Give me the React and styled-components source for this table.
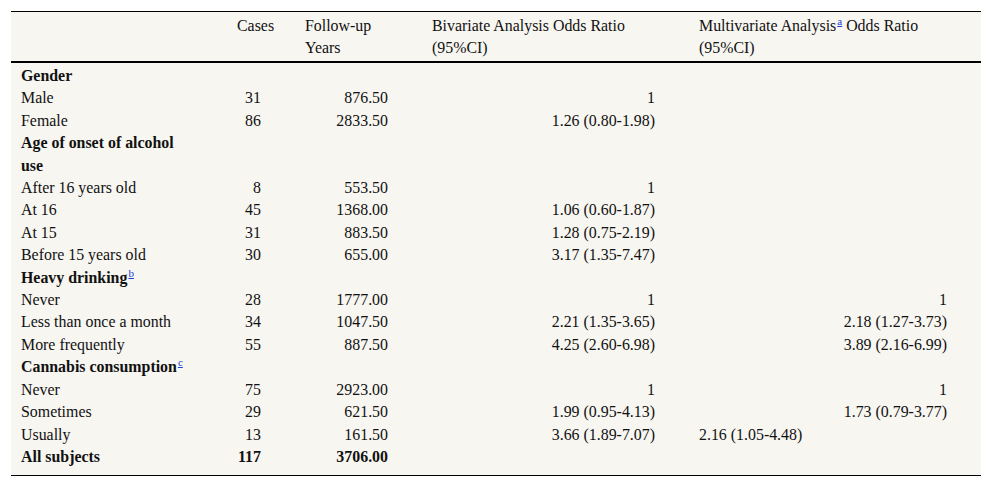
import React from "react";
import styled, { createGlobalStyle } from "styled-components";

const Global = createGlobalStyle`
  html, body { margin: 0; padding: 0; background: #ffffff; }
  body { font-family: "Liberation Serif", "Times New Roman", serif; }
`;

const Page = styled.div`
  padding: 11px 11px 0 11px;
`;

const Table = styled.table`
  width: 970px;
  table-layout: fixed;
  border-collapse: collapse;
  background: #f8f6f1;
  font-family: "Liberation Serif", "Times New Roman", serif;
  font-size: 15.9px;
  line-height: 22.4px;
  color: #111;
  border-top: 1px solid #000;
  border-bottom: 1px solid #000;
`;

const Head = styled.thead`
  border-bottom: 2px solid #000;
`;

const Th = styled.th`
  font-weight: normal;
  text-align: left;
  vertical-align: top;
  padding: 3px 34px 2px 10px;
  line-height: 22px;
`;

const Td = styled.td`
  padding: ${(p) => (p.$first ? "2px" : "0")} 34px ${(p) => (p.$last ? "7px" : "0")} 10px;
  text-align: ${(p) => (p.$left ? "left" : "right")};
  font-weight: ${(p) => (p.$bold ? "bold" : "normal")};
  vertical-align: top;
`;

const LabelTd = styled(Td)`
  text-align: left;
`;

const Sup = styled.sup`
  font-size: 11px;
  line-height: 0;
  vertical-align: 6px;
  margin-left: 1px;
  a {
    color: #1a3ed8;
    text-decoration: underline;
    font-weight: normal;
  }
`;

const Note = ({ c }) => (
  <Sup>
    <a href="#">{c}</a>
  </Sup>
);

const rows = [
  { label: "Gender", group: true, first: true },
  { label: "Male", cases: "31", years: "876.50", bi: "1" },
  { label: "Female", cases: "86", years: "2833.50", bi: "1.26 (0.80-1.98)" },
  { label: "Age of onset of alcohol use", group: true },
  { label: "After 16 years old", cases: "8", years: "553.50", bi: "1" },
  { label: "At 16", cases: "45", years: "1368.00", bi: "1.06 (0.60-1.87)" },
  { label: "At 15", cases: "31", years: "883.50", bi: "1.28 (0.75-2.19)" },
  { label: "Before 15 years old", cases: "30", years: "655.00", bi: "3.17 (1.35-7.47)" },
  { label: "Heavy drinking", group: true, note: "b" },
  { label: "Never", cases: "28", years: "1777.00", bi: "1", multi: "1" },
  { label: "Less than once a month", cases: "34", years: "1047.50", bi: "2.21 (1.35-3.65)", multi: "2.18 (1.27-3.73)" },
  { label: "More frequently", cases: "55", years: "887.50", bi: "4.25 (2.60-6.98)", multi: "3.89 (2.16-6.99)" },
  { label: "Cannabis consumption", group: true, note: "c" },
  { label: "Never", cases: "75", years: "2923.00", bi: "1", multi: "1" },
  { label: "Sometimes", cases: "29", years: "621.50", bi: "1.99 (0.95-4.13)", multi: "1.73 (0.79-3.77)" },
  { label: "Usually", cases: "13", years: "161.50", bi: "3.66 (1.89-7.07)", multi: "2.16 (1.05-4.48)", multiLeft: true },
  { label: "All subjects", cases: "117", years: "3706.00", bold: true, last: true },
];

export default function App() {
  return (
    <Page>
      <Global />
      <Table>
        <colgroup>
          <col style={{ width: "216px" }} />
          <col style={{ width: "68px" }} />
          <col style={{ width: "127px" }} />
          <col style={{ width: "267px" }} />
          <col style={{ width: "292px" }} />
        </colgroup>
        <Head>
          <tr>
            <Th></Th>
            <Th>Cases</Th>
            <Th>Follow-up Years</Th>
            <Th>Bivariate Analysis Odds Ratio (95%CI)</Th>
            <Th>
              Multivariate Analysis
              <Note c="a" /> Odds Ratio (95%CI)
            </Th>
          </tr>
        </Head>
        <tbody>
          {rows.map((r, i) =>
            r.group ? (
              <tr key={i}>
                <LabelTd $bold $first={r.first}>
                  {r.label}
                  {r.note && <Note c={r.note} />}
                </LabelTd>
                <Td $first={r.first} />
                <Td $first={r.first} />
                <Td $first={r.first} />
                <Td $first={r.first} />
              </tr>
            ) : (
              <tr key={i}>
                <LabelTd $bold={r.bold} $last={r.last}>{r.label}</LabelTd>
                <Td $bold={r.bold} $last={r.last}>{r.cases}</Td>
                <Td $bold={r.bold} $last={r.last}>{r.years}</Td>
                <Td $last={r.last}>{r.bi}</Td>
                <Td $last={r.last} $left={r.multiLeft}>{r.multi}</Td>
              </tr>
            )
          )}
        </tbody>
      </Table>
    </Page>
  );
}
